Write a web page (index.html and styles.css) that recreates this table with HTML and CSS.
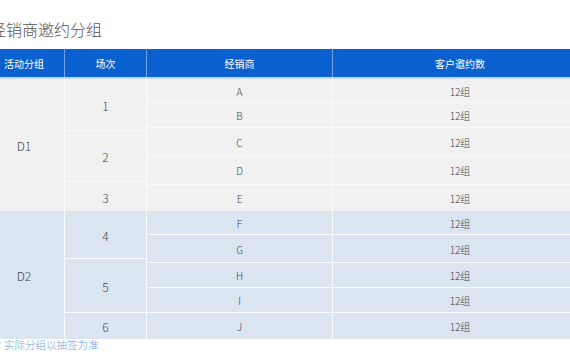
FILE: index.html
```html
<!DOCTYPE html>
<html lang="zh-CN">
<head>
<meta charset="utf-8">
<link rel="stylesheet" href="styles.css">
</head>
<body>
<div class="page">
  <h1 class="title">经销商邀约分组</h1>
  <div class="table">
    <div class="thead">
      <div class="th c1">活动分组</div>
      <div class="th c2">场次</div>
      <div class="th c3">经销商</div>
      <div class="th c4">客户邀约数</div>
    </div>
    <div class="group g1">
      <div class="gcell c1">D1</div>
      <div class="sessions c2">
        <div class="scell h52">1</div>
        <div class="scell h51">2</div>
        <div class="scell h29 last">3</div>
      </div>
      <div class="rows">
        <div class="row h24"><div class="cell c3">A</div><div class="cell c4">12组</div></div>
        <div class="row h25"><div class="cell c3">B</div><div class="cell c4">12组</div></div>
        <div class="row h28"><div class="cell c3">C</div><div class="cell c4">12组</div></div>
        <div class="row h29"><div class="cell c3">D</div><div class="cell c4">12组</div></div>
        <div class="row h26 last"><div class="cell c3">E</div><div class="cell c4">12组</div></div>
      </div>
    </div>
    <div class="group g2">
      <div class="gcell c1">D2</div>
      <div class="sessions c2">
        <div class="scell h48">4</div>
        <div class="scell h54">5</div>
        <div class="scell h26 last">6</div>
      </div>
      <div class="rows">
        <div class="row h24"><div class="cell c3">F</div><div class="cell c4">12组</div></div>
        <div class="row h28"><div class="cell c3">G</div><div class="cell c4">12组</div></div>
        <div class="row h25"><div class="cell c3">H</div><div class="cell c4">12组</div></div>
        <div class="row h25"><div class="cell c3">I</div><div class="cell c4">12组</div></div>
        <div class="row h26 last"><div class="cell c3">J</div><div class="cell c4">12组</div></div>
      </div>
    </div>
  </div>
  <p class="note">* 实际分组以抽签为准</p>
</div>
</body>
</html>
```
FILE: styles.css
```css
html, body {
  margin: 0;
  padding: 0;
  overflow: hidden;
  background: #ffffff;
}
body {
  font-family: "Noto Sans CJK SC", "Noto Sans", sans-serif;
  font-weight: 300;
  color: #444444;
}
.page {
  width: 603px;
  margin-left: -16px;
}
.title {
  margin: 0 0 11px 6px;
  padding-top: 20px;
  font-size: 16px;
  line-height: 18px;
  font-weight: 300;
  color: #555555;
}
.table {
  display: flex;
  flex-direction: column;
}
.thead {
  display: flex;
  height: 30px;
  background: #0b60d0;
  border-bottom: 2px solid #c2d6f2;
  box-sizing: border-box;
}
.th {
  display: flex;
  align-items: center;
  justify-content: center;
  color: #ffffff;
  font-size: 10px;
  font-weight: 400;
  border-right: 1px solid #6fa2e8;
  box-sizing: border-box;
}
.th.c4 { border-right: none; }
.c1 { width: 81px; flex: none; }
.c2 { width: 82px; flex: none; }
.c3 { width: 186px; flex: none; }
.c4 { width: 254px; flex: none; }
.group {
  display: flex;
}
.g1 { background: #f1f1f1; }
.g2 { background: #dbe5f1; }
.gcell {
  display: flex;
  align-items: center;
  justify-content: center;
  padding-top: 1px;
  font-size: 12px;
  border-right: 1px solid #fafafa;
  box-sizing: border-box;
}
.sessions {
  display: flex;
  flex-direction: column;
  border-right: 1px solid #fafafa;
  box-sizing: border-box;
}
.scell {
  display: flex;
  align-items: center;
  justify-content: center;
  padding-top: 1px;
  font-size: 12px;
  border-bottom: 1px solid #fafafa;
  box-sizing: border-box;
}
.rows {
  display: flex;
  flex-direction: column;
}
.row {
  display: flex;
  border-bottom: 1px solid #fafafa;
  box-sizing: border-box;
}
.last { border-bottom: none; }
.cell {
  display: flex;
  align-items: center;
  justify-content: center;
  padding-top: 1px;
  font-size: 10px;
  box-sizing: border-box;
}
.cell.c3 { border-right: 1px solid #fafafa; }
.h24 { height: 24px; }
.h25 { height: 25px; }
.h26 { height: 26px; }
.h28 { height: 28px; }
.h29 { height: 29px; }
.h48 { height: 48px; }
.h51 { height: 51px; }
.h52 { height: 52px; }
.h54 { height: 54px; }
.note {
  margin: 0 0 0 13px;
  font-size: 10.5px;
  line-height: 12px;
  color: #6e9fe0;
}
```
